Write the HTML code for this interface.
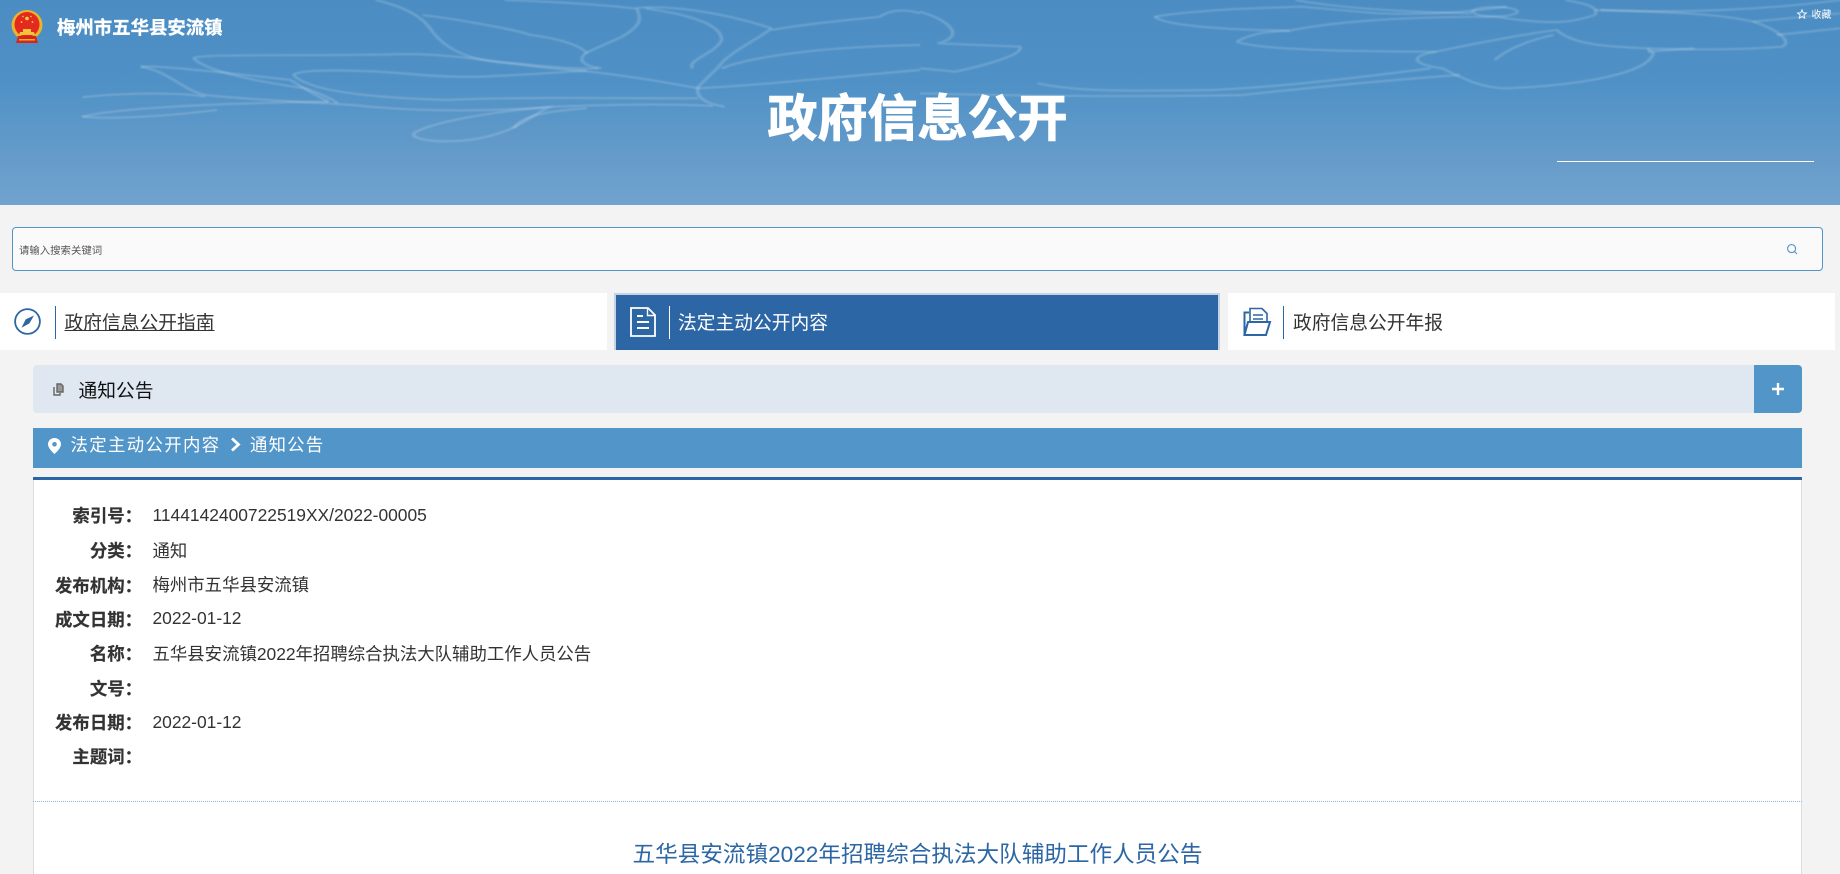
<!DOCTYPE html>
<html lang="zh-CN">
<head>
<meta charset="utf-8">
<title>政府信息公开</title>
<style>
html,body{margin:0;padding:0;width:1840px;height:874px;overflow:hidden;background:#f3f3f3;}
body{position:relative;font-family:"Liberation Sans","Noto Sans CJK SC",sans-serif;color:#333;}
.a{position:absolute;white-space:nowrap;}
.t{position:absolute;white-space:nowrap;line-height:30px;height:30px;}
.lab{position:absolute;white-space:nowrap;right:1698px;font-size:17.4px;font-weight:bold;color:#333;line-height:30px;height:30px;text-align:right;-webkit-text-stroke:.2px #333;}
.val{position:absolute;white-space:nowrap;left:152.5px;font-size:17.4px;color:#333;line-height:30px;height:30px;}
svg{position:absolute;display:block;overflow:visible;}
</style>
</head>
<body>
<!-- header -->
<div class="a" style="left:0;top:0;width:1840px;height:205px;background:linear-gradient(180deg,#4b8dc3 0%,#4f91c6 40%,#6a9ecb 85%,#70a3ce 100%);overflow:hidden;">
<svg width="1840" height="205" style="left:0;top:0;filter:blur(.7px)" viewBox="0 0 1840 205">
<g transform="scale(0.58673,0.33333)" fill="none" stroke="#fff" stroke-opacity=".17">
<g stroke-width="6.5">
<path d="M640 0C690 20 720 50 735 90C760 150 800 185 880 190C930 200 980 208 1020 205"/>
<path d="M720 45C790 60 880 90 905 105C950 115 990 135 1000 160"/>
<path d="M1085 25C1095 60 1090 80 1060 110C1030 135 1000 155 995 165C985 185 1000 200 1025 205"/>
<path d="M860 0C950 5 1030 15 1080 25C1130 15 1220 30 1315 85"/>
<path d="M1315 85C1290 120 1240 160 1225 200L1190 260C1185 290 1200 310 1235 320"/>
<path d="M1315 90C1380 70 1450 60 1500 50C1520 25 1550 30 1568 40"/>
<path d="M1230 205C1280 170 1400 140 1568 135"/>
<path d="M1100 25C1180 45 1230 75 1230 120C1220 160 1170 180 1180 205"/>
<path d="M330 175C340 160 500 170 700 162C800 165 880 200 990 212C1060 225 1130 245 1190 265"/>
<path d="M330 175C350 210 420 240 520 265C545 280 570 300 575 310"/>
<path d="M500 225C510 205 620 210 700 222C800 240 870 225 1000 212"/>
<path d="M240 200C270 195 420 225 495 240C510 255 530 280 560 305"/>
<path d="M240 200C290 215 310 270 350 285C430 300 520 305 600 315C680 330 800 340 940 320C1030 315 1130 310 1215 318"/>
<path d="M140 292C200 280 300 275 350 290"/>
<path d="M140 350C200 325 350 310 560 305"/>
<path d="M140 350C200 360 300 345 370 330"/>
<path d="M705 400C730 370 830 335 935 322C900 350 880 400 800 420C750 430 700 420 705 400"/>
<path d="M500 225C520 260 580 290 760 300C900 290 1050 295 1190 295"/>
<path d="M1190 265C1300 255 1400 235 1568 210"/>
<path d="M875 385C890 350 920 335 1000 325"/>
</g>
<g transform="translate(1568,0)" stroke-width="6.5">
<path d="M0 35C50 60 80 110 30 130L170 140C180 165 100 200 60 215L0 205"/>
<path d="M400 50C470 30 560 25 650 20L780 40C850 45 920 40 1000 20"/>
<path d="M400 50C420 80 540 90 630 92C720 60 850 50 980 50C1060 70 1100 75 1150 45C1160 20 1130 10 1100 0"/>
<path d="M540 125C570 95 600 95 630 92M540 125C570 145 680 155 880 155C960 125 1040 100 1085 90C1110 130 1160 140 1240 145C1320 150 1400 150 1470 140C1490 120 1450 80 1420 65C1360 40 1260 35 1150 30"/>
<path d="M880 155C840 165 830 190 890 205C930 240 960 265 1000 265C1130 255 1240 220 1250 160L1240 145"/>
<path d="M980 180C1000 145 1050 115 1080 105"/>
<ellipse cx="980" cy="35" rx="38" ry="14"/>
<path d="M200 250C260 270 300 275 500 270C620 260 760 230 870 205M0 280C200 290 420 290 550 285C680 260 800 240 920 225"/>
<path d="M1240 155L1320 145M1460 105L1568 85M1420 65L1568 40M1160 30C1300 40 1440 30 1568 0"/>
<path d="M640 0C700 20 800 35 940 40"/>
</g>
</g>
</svg>
</div>

<!-- emblem -->
<svg width="34" height="36" style="left:10px;top:9px" viewBox="0 0 34 36">
<ellipse cx="17" cy="16" rx="15.5" ry="15" fill="#e8b42c"/>
<ellipse cx="17" cy="15.5" rx="12.5" ry="12.5" fill="#e42a1e"/>
<path d="M6 34l2-7h18l2 7z" fill="#d9241c"/>
<path d="M9 30h16v1.5H9z" fill="#e8b42c"/>
<path d="M10 23h14l1 3H9zM13 20h8v3h-8z" fill="#f2c63c"/>
<circle cx="17" cy="9.5" r="1.8" fill="#f8d548"/>
<circle cx="11.5" cy="13" r=".9" fill="#f8d548"/><circle cx="22.5" cy="13" r=".9" fill="#f8d548"/>
<circle cx="13" cy="7.5" r=".8" fill="#f8d548"/><circle cx="21" cy="7.5" r=".8" fill="#f8d548"/>
</svg>

<div class="t" style="left:57px;top:13px;font-size:18.4px;font-weight:bold;color:#fff;-webkit-text-stroke:.3px #fff;">梅州市五华县安流镇</div>
<svg width="10" height="10" style="left:1797px;top:9px" viewBox="0 0 10 10"><path d="M5 .8L6.2 3.8 9.4 4 6.9 6 7.700 9.2 5 7.500 2.300 9.2 3.100 6 .6 4 3.800 3.800Z" fill="none" stroke="#fff" stroke-width=".9"/></svg>
<div class="t" style="left:1811.500px;top:1px;font-size:10px;color:#fff;">收藏</div>
<div class="a" style="left:0;top:89px;width:1835px;text-align:center;font-size:50px;font-weight:bold;color:#fff;line-height:60px;height:60px;-webkit-text-stroke:1px #fff;">政府信息公开</div>
<div class="a" style="left:1557px;top:160.500px;width:257px;height:1px;background:#fff;"></div>

<!-- search -->
<div class="a" style="left:12px;top:227px;width:1809px;height:42px;background:#fafafa;border:1px solid #5295c9;border-radius:4px;"></div>
<div class="t" style="left:19px;top:236.500px;font-size:10.400px;color:#555;">请输入搜索关键词</div>
<svg width="12" height="12" style="left:1786px;top:243px" viewBox="0 0 12 12" fill="none" stroke="#5295c9" stroke-width="1.100"><circle cx="5.600" cy="5.600" r="4"/><path d="M8.500 8.500L11 11"/></svg>

<!-- tabs -->
<div class="a" style="left:0;top:293px;width:607px;height:57px;background:#fff;"></div>
<div class="a" style="left:614px;top:293px;width:602px;height:55px;background:#2c66a4;border:solid #c3d3e3;border-width:2px 2px 0 2px;"></div>
<div class="a" style="left:1228px;top:293px;width:607px;height:57px;background:#fff;"></div>

<svg width="28" height="28" style="left:14px;top:308px" viewBox="0 0 28 28"><circle cx="13.500" cy="13.500" r="12.400" fill="none" stroke="#2c66a4" stroke-width="1.800"/><path d="M20 7.500L15.400 15.400 7.500 19.700l4.200-8.300z" fill="#2c66a4"/></svg>
<div class="a" style="left:55px;top:306px;width:1px;height:33px;background:#2c66a4;"></div>
<div class="t" style="left:64.500px;top:308px;font-size:18.750px;color:#333;text-decoration:underline;">政府信息公开指南</div>

<svg width="26" height="30" style="left:629.500px;top:307px" viewBox="0 0 26 30" fill="none" stroke="#fff" stroke-width="1.800"><path d="M1 1H18L25 8V29H1Z"/><path d="M17.500 1V8.500H25" stroke-width="1.400"/><path d="M7 9H13M7 15H19M7 21H19" stroke-width="2"/></svg>
<div class="a" style="left:669px;top:306px;width:1px;height:33px;background:#fff;"></div>
<div class="t" style="left:678px;top:308px;font-size:18.750px;color:#fff;">法定主动公开内容</div>

<svg width="28" height="30" style="left:1243px;top:307px" viewBox="0 0 28 30" fill="none" stroke="#2c66a4" stroke-width="2"><path d="M7 14V1.500H19L24 6.500V15" stroke-width="1.600"/><path d="M10 8H20M10 12H20" stroke-width="1.500"/><path d="M1.500 28V5.500H6"/><path d="M1.500 28L5 15H27L23 28Z"/></svg>
<div class="a" style="left:1283px;top:306px;width:1px;height:33px;background:#2c66a4;"></div>
<div class="t" style="left:1293px;top:308px;font-size:18.750px;color:#333;">政府信息公开年报</div>

<!-- accordion -->
<div class="a" style="left:33px;top:365px;width:1769px;height:48px;background:#dfe8f1;border-radius:4px;"></div>
<div class="a" style="left:1754px;top:365px;width:48px;height:48px;background:#5295c9;border-radius:0 4px 4px 0;"></div>
<svg width="12" height="12" style="left:1772px;top:383px" viewBox="0 0 12 12"><path d="M6 0V12M0 6H12" stroke="#fff" stroke-width="2.400"/></svg>
<svg width="11" height="13" style="left:53px;top:383px" viewBox="0 0 11 13" fill="none" stroke="#666" stroke-width="1.400"><path d="M4 1H8L10 3V9H4Z" fill="#999"/><path d="M1 4V12H7V10"/></svg>
<div class="t" style="left:78.500px;top:376px;font-size:18.750px;color:#111;">通知公告</div>

<!-- breadcrumb -->
<div class="a" style="left:33px;top:428px;width:1769px;height:40px;background:#5295c9;"></div>
<svg width="13" height="16" style="left:48px;top:437.500px" viewBox="0 0 13 16"><path fill-rule="evenodd" d="M6.500 0C10 0 13 2.700 13 6.200 13 10 8.500 14 6.500 16 4.500 14 0 10 0 6.200 0 2.700 3 0 6.500 0ZM6.500 4A2.300 2.300 0 1 0 6.500 8.600 2.300 2.300 0 0 0 6.500 4Z" fill="#fff"/></svg>
<div class="t" style="left:70.500px;top:429.500px;font-size:17.400px;letter-spacing:1.350px;color:#fff;">法定主动公开内容</div>
<svg width="11" height="15" style="left:230px;top:437px" viewBox="0 0 11 15"><path d="M2 1.500L8.500 7.500 2 13.500" fill="none" stroke="#fff" stroke-width="2.800"/></svg>
<div class="t" style="left:250px;top:429.500px;font-size:17.400px;letter-spacing:1.200px;color:#fff;">通知公告</div>

<!-- content -->
<div class="a" style="left:33px;top:477px;width:1767px;height:397px;background:#fff;border:solid #ddd;border-width:0 1px;"></div>
<div class="a" style="left:33px;top:477px;width:1769px;height:3px;background:#2c66a4;"></div>

<div class="lab" style="top:501px;">索引号：</div><div class="val" style="top:500px;">1144142400722519XX/2022-00005</div>
<div class="lab" style="top:536px;">分类：</div><div class="val" style="top:536px;">通知</div>
<div class="lab" style="top:571px;">发布机构：</div><div class="val" style="top:570px;">梅州市五华县安流镇</div>
<div class="lab" style="top:605px;">成文日期：</div><div class="val" style="top:603px;">2022-01-12</div>
<div class="lab" style="top:639px;">名称：</div><div class="val" style="top:639px;">五华县安流镇2022年招聘综合执法大队辅助工作人员公告</div>
<div class="lab" style="top:674px;">文号：</div>
<div class="lab" style="top:708px;">发布日期：</div><div class="val" style="top:707px;">2022-01-12</div>
<div class="lab" style="top:742px;">主题词：</div>

<div class="a" style="left:33px;top:801px;width:1769px;height:0;border-top:1px dotted #8fb4d6;"></div>
<div class="a" style="left:33px;top:838px;width:1769px;text-align:center;font-size:22.600px;color:#2c66a4;line-height:34px;height:34px;">五华县安流镇2022年招聘综合执法大队辅助工作人员公告</div>
</body>
</html>
